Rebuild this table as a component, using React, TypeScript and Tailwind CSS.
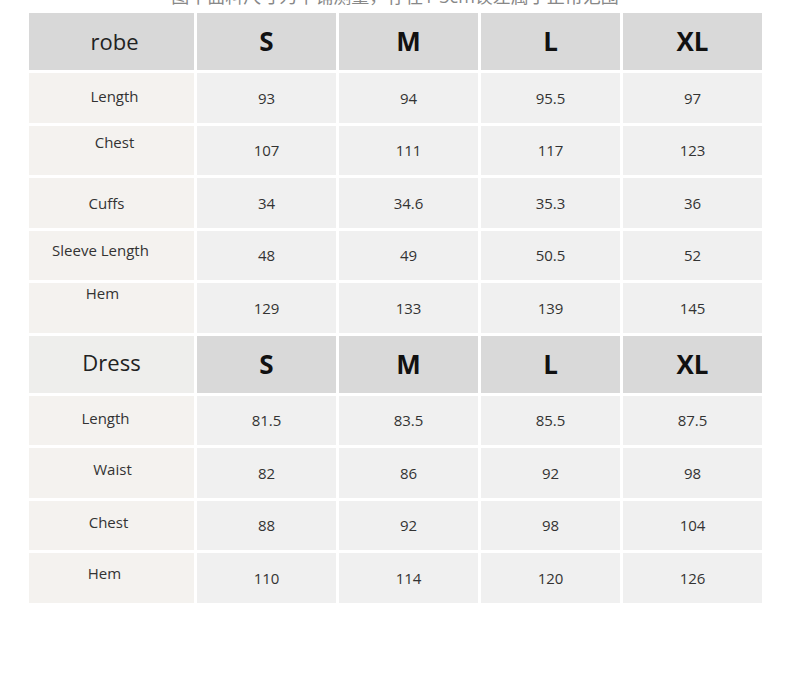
import React from "react";

type Row = { label: string; values: string[]; lbl: string };

const robeRows: Row[] = [
  { label: "Length", values: ["93", "94", "95.5", "97"], lbl: "pl-[6px] pb-[3px]" },
  { label: "Chest", values: ["107", "111", "117", "123"], lbl: "pl-[6px] pb-[16px]" },
  { label: "Cuffs", values: ["34", "34.6", "35.3", "36"], lbl: "pr-[10px] pt-[1px]" },
  { label: "Sleeve Length", values: ["48", "49", "50.5", "52"], lbl: "pr-[22px] pb-[10px]" },
  { label: "Hem", values: ["129", "133", "139", "145"], lbl: "pr-[18px] pb-[30px]" },
];

const dressRows: Row[] = [
  { label: "Length", values: ["81.5", "83.5", "85.5", "87.5"], lbl: "pr-[12px] pb-[4px]" },
  { label: "Waist", values: ["82", "86", "92", "98"], lbl: "pl-[2px] pb-[8px]" },
  { label: "Chest", values: ["88", "92", "98", "104"], lbl: "pr-[6px] pb-[6px]" },
  { label: "Hem", values: ["110", "114", "120", "126"], lbl: "pr-[14px] pb-[10px]" },
];

const sizes = ["S", "M", "L", "XL"];

function Header({ title, light }: { title: string; light?: boolean }) {
  return (
    <>
      <div
        className={
          light
            ? "h-[57px] flex items-center justify-center bg-[#eeeeec] text-[22px] text-[#222] pb-[4px]"
            : "h-[57px] flex items-center justify-center bg-[#d8d8d8] text-[22px] text-[#222] pl-[6px]"
        }
      >
        {title}
      </div>
      {sizes.map(s => (
        <div key={s} className="h-[57px] flex items-center justify-center bg-[#d9d9d9] text-[26px] font-bold text-[#111]">
          {s}
        </div>
      ))}
    </>
  );
}

function Rows({ rows }: { rows: Row[] }) {
  return (
    <>
      {rows.map(r => (
        <React.Fragment key={r.label}>
          <div className={`h-[49.5px] flex items-center justify-center bg-[#f4f2ef] text-[15px] text-[#333] ${r.lbl}`}>
            {r.label}
          </div>
          {r.values.map((v, i) => (
            <div key={i} className="h-[49.5px] flex items-center justify-center bg-[#f0f0f0] text-[15px] text-[#333]">
              {v}
            </div>
          ))}
        </React.Fragment>
      ))}
    </>
  );
}

export default function App() {
  return (
    <div className="w-[790px] h-[687px] bg-white font-['Open_Sans','Noto_Sans','Noto_Sans_CJK_SC',sans-serif]">
      {/* caption line, cut off at the top edge as in the source image */}
      <div className="h-[6px] overflow-hidden text-center">
        <div className="-mt-[14px] leading-[20px] text-[18px] text-[#888]">
          图中面料尺寸为平铺测量，存在1-3cm误差属于正常范围
        </div>
      </div>
      <div className="pt-[7px] pl-[29px]">
        <div className="grid grid-cols-[165px_139px_139px_139px_139px] gap-[3px] w-[733px]">
          <Header title="robe" />
          <Rows rows={robeRows} />
          <Header title="Dress" light />
          <Rows rows={dressRows} />
        </div>
      </div>
    </div>
  );
}
